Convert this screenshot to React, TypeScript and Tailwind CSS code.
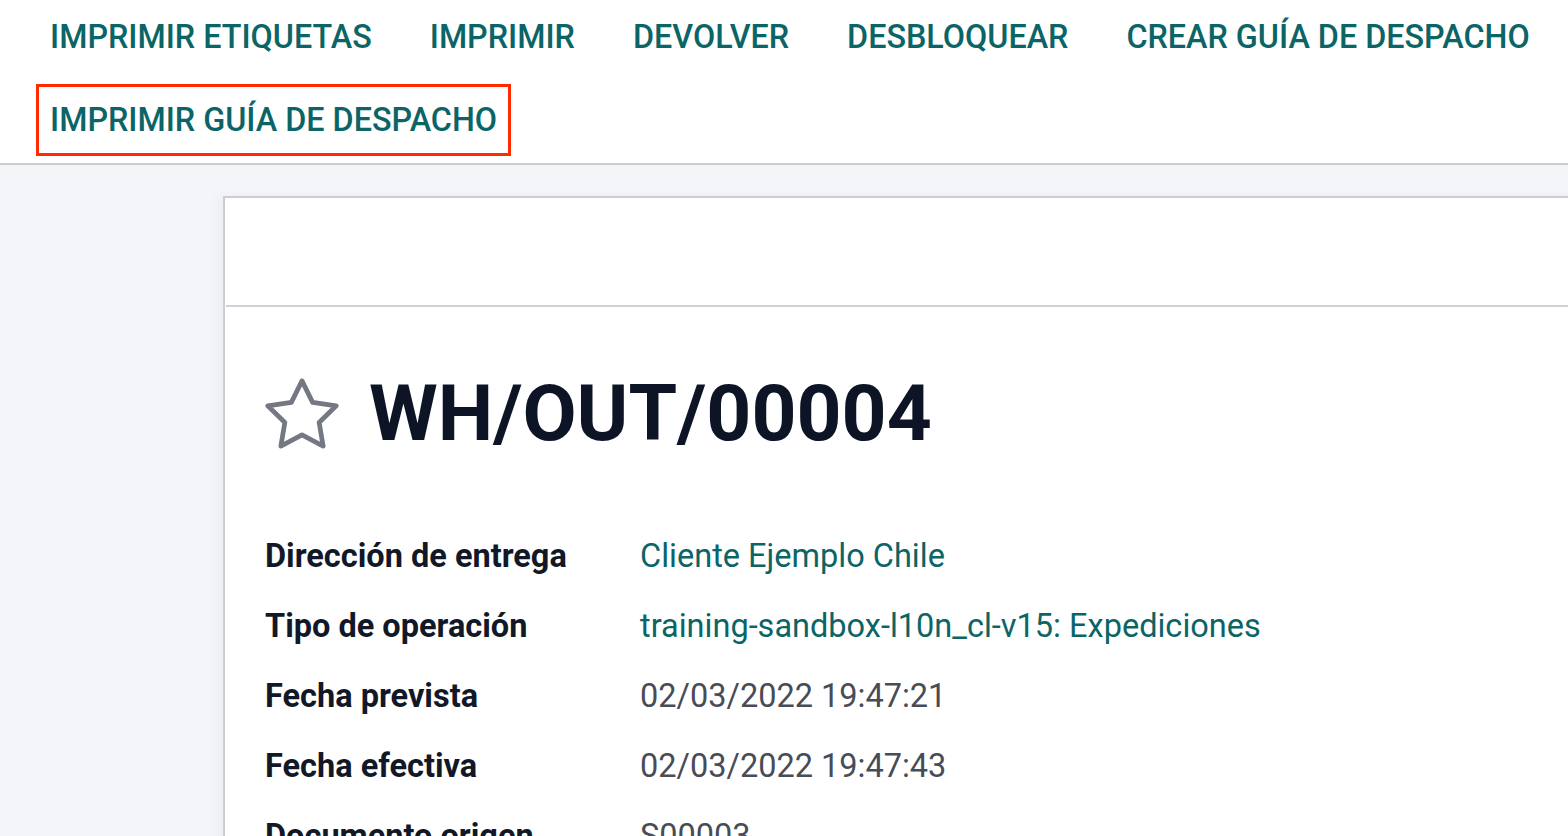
import React from "react";

const teal = "text-[#0b6566]";

function Star() {
  return (
    <svg width="74" height="71" viewBox="1.9 1.9 20.2 19.4" fill="none" stroke="#747882" strokeWidth="1.3" strokeLinejoin="round">
      <path d="M12 2.7l2.9 5.85 6.45.95-4.67 4.55 1.1 6.45L12 17.45l-5.78 3.05 1.1-6.45L2.65 9.5l6.45-.95z" />
    </svg>
  );
}

export default function App() {
  const row1 = ["IMPRIMIR ETIQUETAS", "IMPRIMIR", "DEVOLVER", "DESBLOQUEAR", "CREAR GUÍA DE DESPACHO"];
  const fields: [string, string, "link" | "text"][] = [
    ["Dirección de entrega", "Cliente Ejemplo Chile", "link"],
    ["Tipo de operación", "training-sandbox-l10n_cl-v15: Expediciones", "link"],
    ["Fecha prevista", "02/03/2022 19:47:21", "text"],
    ["Fecha efectiva", "02/03/2022 19:47:43", "text"],
    ["Documento origen", "S00003", "text"],
  ];
  return (
    <div className="w-[1568px] h-[836px] overflow-hidden bg-[#f4f5f8] flex flex-col" style={{ fontFamily: "Roboto, 'Noto Sans', sans-serif" }}>
      <div className="bg-white border-b-2 border-[#cbcdd3] pl-[36px] pt-[1px] pb-[7px] flex flex-col gap-[11px]">
        <div className="flex gap-x-[30px]">
          {row1.map((t) => (
            <div key={t} className={`h-[72px] px-[11px] border-[3px] border-transparent flex items-center text-[32.3px] font-medium whitespace-nowrap ${teal}`}>
              {t}
            </div>
          ))}
        </div>
        <div className="flex">
          <div className={`h-[72px] px-[11px] border-[3px] border-[#ff2a00] flex items-center text-[32.3px] font-medium whitespace-nowrap ${teal}`}>
            IMPRIMIR GUÍA DE DESPACHO
          </div>
        </div>
      </div>
      <div className="flex-1 pt-[31px] pl-[223px]">
        <div className="w-[1400px] h-full bg-white border-l-2 border-t-2 border-[#cbcdd3] shadow-[-6px_0_12px_rgba(0,0,0,0.03)]">
          <div className="h-[107px]" />
          <div className="h-[2px] bg-[#cfd1d7] ml-[1px]" />
          <div className="pl-[40px] pt-[68px]">
            <div className="flex items-center h-[76px]">
              <Star />
              <div className="ml-[30px] text-[78.6px] leading-none font-bold text-[#0d1426] whitespace-nowrap">WH/OUT/00004</div>
            </div>
            <div className="mt-[70px] flex flex-col">
              {fields.map(([l, v, k]) => (
                <div key={l} className="flex items-center h-[70px]">
                  <div className="w-[375px] text-[32.5px] font-bold text-[#111827] whitespace-nowrap">{l}</div>
                  <div className={`text-[32.5px] whitespace-nowrap ${k === "link" ? teal : "text-[#474c57]"}`}>{v}</div>
                </div>
              ))}
            </div>
          </div>
        </div>
      </div>
    </div>
  );
}
